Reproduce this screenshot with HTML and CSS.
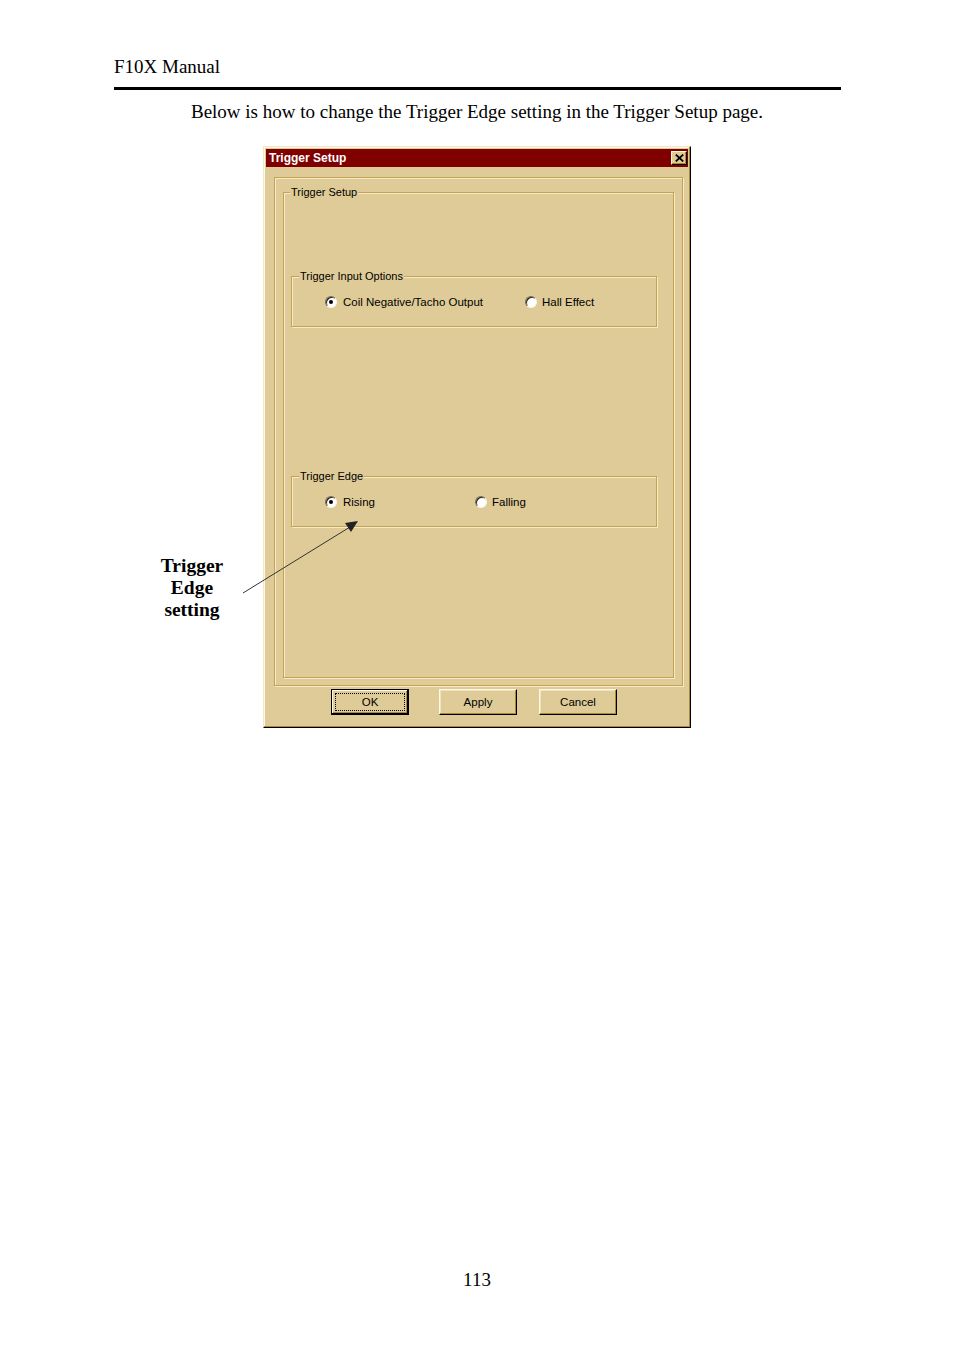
FILE: index.html
```html
<!DOCTYPE html>
<html lang="en">
<head>
<meta charset="utf-8">
<title>F10X Manual - Trigger Setup</title>
<link rel="stylesheet" href="styles.css">
</head>
<body>
<div class="page">
  <div class="header">F10X Manual</div>
  <p class="intro">Below is how to change the Trigger Edge setting in the Trigger Setup page.</p>

  <div class="figure">
    <div class="note">Trigger<br>Edge<br>setting</div>

    <div class="dialog">
      <div class="titlebar">
        <span class="title">Trigger Setup</span>
        <span class="close"><svg width="9" height="8" viewBox="0 0 9 8"><path d="M0.8 0.6L8.2 7.4M8.2 0.6L0.8 7.4" stroke="#000" stroke-width="1.8" fill="none"/></svg></span>
      </div>

      <div class="frame">
        <div class="group outer">
          <div class="legend">Trigger Setup</div>

          <div class="group inner first">
            <div class="legend legend-inner">Trigger Input Options</div>
            <div class="radios">
              <label class="radio wide"><span class="dot checked"></span>Coil Negative/Tacho Output</label>
              <label class="radio"><span class="dot"></span>Hall Effect</label>
            </div>
          </div>

          <div class="group inner second">
            <div class="legend legend-inner">Trigger Edge</div>
            <div class="radios">
              <label class="radio narrow"><span class="dot checked"></span>Rising</label>
              <label class="radio"><span class="dot"></span>Falling</label>
            </div>
          </div>
        </div>
      </div>

      <div class="buttons">
        <button class="btn default"><span class="focus">OK</span></button>
        <button class="btn apply"><span class="label">Apply</span></button>
        <button class="btn cancel"><span class="label">Cancel</span></button>
      </div>
    </div>
  </div>

  <div class="pagenum">113</div>

  <svg class="arrow" width="954" height="1351" viewBox="0 0 954 1351">
    <line x1="243" y1="593" x2="350" y2="527" stroke="#333" stroke-width="1"/>
    <polygon points="358,521 351,532 345,523" fill="#222"/>
  </svg>
</div>
</body>
</html>
```

FILE: styles.css
```css
html, body {
  margin: 0;
  padding: 0;
  background: #fff;
}

.page {
  position: relative;
  width: 954px;
  min-height: 1351px;
  font-family: "Liberation Serif", "Times New Roman", serif;
  color: #000;
}

.header {
  margin-left: 114px;
  width: 727px;
  padding-top: 56px;
  padding-bottom: 9px;
  border-bottom: 3px solid #000;
  font-size: 19px;
  line-height: 22px;
}

.intro {
  margin: 11px 0 0 0;
  text-align: center;
  font-size: 19px;
  line-height: 22px;
}

.figure {
  display: flex;
  align-items: flex-start;
  margin-left: 150px;
  margin-top: 23px;
}

.note {
  width: 84px;
  margin-top: 409px;
  margin-right: 29px;
  text-align: center;
  font-weight: bold;
  font-size: 19.5px;
  line-height: 22px;
}

/* ---------- dialog ---------- */
.dialog {
  width: 428px;
  height: 582px;
  box-sizing: border-box;
  padding: 2px;
  background: #dfcb97;
  border: 1px solid;
  border-color: #f3e7c4 #000 #000 #f3e7c4;
  box-shadow: inset -1px -1px 0 #a8893f, inset 1px 1px 0 #fff8e4;
  display: flex;
  flex-direction: column;
  font-family: "Liberation Sans", Arial, sans-serif;
  font-size: 11px;
  color: #000;
}

.titlebar {
  height: 18px;
  flex: none;
  background: #800000;
  display: flex;
  align-items: center;
  justify-content: space-between;
  padding: 0 1px 0 3px;
  color: #fff;
  font-weight: bold;
  font-size: 12px;
}

.title {
  line-height: 18px;
}

.close {
  width: 16px;
  height: 14px;
  box-sizing: border-box;
  background: #dfcb97;
  border: 1px solid;
  border-color: #fff8e4 #000 #000 #fff8e4;
  box-shadow: inset -1px -1px 0 #a8893f;
  display: flex;
  align-items: center;
  justify-content: center;
}

.frame {
  flex: none;
  height: 509px;
  box-sizing: border-box;
  margin: 10px 5px 0 8px;
  padding: 14px 8px 7px 8px;
  border: 1px solid #c4a24e;
  box-shadow: inset 1px 1px 0 #f5ebcc, 1px 1px 0 #f5ebcc;
  display: flex;
  flex-direction: column;
}

.group {
  border: 1px solid #c4a24e;
  box-shadow: inset 1px 1px 0 #f5ebcc, 1px 1px 0 #f5ebcc;
}

.group.outer {
  flex: 1;
}

.legend {
  width: max-content;
  margin: -8px 0 0 6px;
  padding: 0 1px;
  background: #dfcb97;
  line-height: 14px;
}

.legend-inner {
  margin-left: 7px;
}

.group.inner {
  width: 364px;
  margin-left: 7px;
  padding-bottom: 17px;
}

.group.first {
  margin-top: 77px;
}

.group.second {
  margin-top: 149px;
}

.radios {
  display: flex;
  align-items: center;
  margin-top: 12px;
  padding-left: 33px;
  height: 14px;
  font-size: 11.5px;
}

.radio {
  display: flex;
  align-items: center;
  line-height: 14px;
  white-space: nowrap;
}

.radio.wide {
  width: 200px;
}

.radio.narrow {
  width: 150px;
}

.dot {
  position: relative;
  width: 12px;
  height: 12px;
  box-sizing: border-box;
  margin-right: 5px;
  border-radius: 50%;
  background: #fff;
  border: 1px solid;
  border-color: #7a6a48 #fbf5e4 #fbf5e4 #7a6a48;
  box-shadow: inset 1px 1px 0 #222;
}

.dot.checked::after {
  content: "";
  position: absolute;
  left: 3px;
  top: 3px;
  width: 4px;
  height: 4px;
  border-radius: 50%;
  background: #000;
}

.radio.wide .dot,
.radio.narrow .dot {
  margin-right: 6px;
}

/* ---------- buttons ---------- */
.buttons {
  display: flex;
  margin-top: 3px;
  padding-left: 65px;
}

.btn {
  width: 78px;
  height: 26px;
  box-sizing: border-box;
  padding: 0;
  margin: 0;
  background: #dfcb97;
  border: 1px solid;
  border-color: #fff8e4 #000 #000 #fff8e4;
  box-shadow: inset -1px -1px 0 #a8893f, inset 1px 1px 0 #efe2bc;
  font-family: "Liberation Sans", Arial, sans-serif;
  font-size: 11.5px;
  color: #000;
  display: flex;
  align-items: center;
  justify-content: center;
}

.btn.default {
  border: 1px solid #000;
  box-shadow: inset -1px -1px 0 #000, inset 1px 1px 0 #fff8e4, inset -2px -2px 0 #a8893f;
}

.btn.apply {
  margin-left: 30px;
}

.btn.cancel {
  margin-left: 22px;
}

.focus {
  display: flex;
  align-items: center;
  justify-content: center;
  width: 68px;
  height: 16px;
  border: 1px dotted #000;
}

.label {
  line-height: 14px;
}

.pagenum {
  margin-top: 541px;
  text-align: center;
  font-size: 19px;
  line-height: 22px;
}

.arrow {
  position: absolute;
  left: 0;
  top: 0;
  pointer-events: none;
}
```
